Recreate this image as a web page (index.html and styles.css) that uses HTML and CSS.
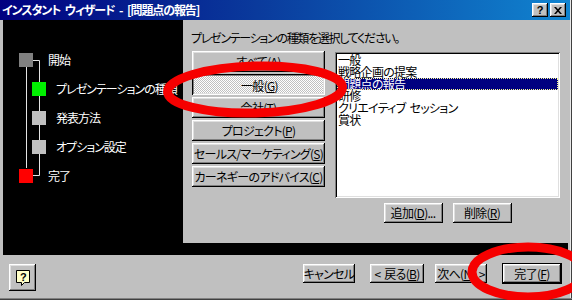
FILE: index.html
```html
<!DOCTYPE html>
<html lang="ja">
<head>
<meta charset="utf-8">
<title>インスタント ウィザード</title>
<link rel="stylesheet" href="styles.css">
</head>
<body>
<div class="window">
  <div class="titlebar">
    <span class="title">インスタント ウィザード - [問題点の報告]</span>
    <div class="tbtns">
      <span class="tbtn">?</span>
      <span class="tbtn"><svg width="8" height="7" viewBox="0 0 8 7"><path d="M0 0h2l2 2.3L6 0h2L5 3.5 8 7H6L4 4.7 2 7H0l3-3.5z" fill="#000"/></svg></span>
    </div>
  </div>
  <div class="main">
    <div class="steps">
      <svg class="connectors" width="180" height="200" viewBox="0 0 180 200">
        <path d="M30 40.5H36.5V155.5H30" fill="none" stroke="#e4e4e4" stroke-width="1"/>
        <path d="M23.5 46V148" fill="none" stroke="#e4e4e4" stroke-width="1"/>
      </svg>
      <div class="step outer"><span class="sq sq-gray"></span><span class="label">開始</span></div>
      <div class="step inner"><span class="sq sq-green"></span><span class="label">プレゼンテーションの種類</span></div>
      <div class="step inner"><span class="sq sq-light"></span><span class="label">発表方法</span></div>
      <div class="step inner"><span class="sq sq-light"></span><span class="label">オプション設定</span></div>
      <div class="step outer"><span class="sq sq-red"></span><span class="label">完了</span></div>
    </div>
    <div class="panel">
      <div class="heading">プレゼンテーションの種類を選択してください。</div>
      <div class="content">
        <div class="cats">
          <button class="btn cat">すべて(<u>A</u>)</button>
          <button class="btn cat pressed">一般(<u>G</u>)</button>
          <button class="btn cat">会社(<u>T</u>)</button>
          <button class="btn cat">プロジェクト(<u>P</u>)</button>
          <button class="btn cat">セールス/マーケティング(<u>S</u>)</button>
          <button class="btn cat">カーネギーのアドバイス(<u>C</u>)</button>
        </div>
        <div class="listcol">
          <div class="listbox">
            <div class="item">一般</div>
            <div class="item">戦略企画の提案</div>
            <div class="item sel">問題点の報告</div>
            <div class="item">研修</div>
            <div class="item">クリエイティブ セッション</div>
            <div class="item">賞状</div>
          </div>
          <div class="listbtns">
            <button class="btn small">追加(<u>D</u>)...</button>
            <button class="btn small">削除(<u>R</u>)</button>
          </div>
        </div>
      </div>
    </div>
  </div>
  <div class="footer">
    <button class="btn helpbtn" aria-label="ヘルプ">
      <svg width="14" height="17" viewBox="0 0 14 17">
        <path d="M0.5 0.5H13.5V12.5H8.5L5.5 15.5V12.5H0.5Z" fill="#ffffc8" stroke="#000" stroke-width="1"/>
        <text x="7" y="10.5" text-anchor="middle" font-family="Liberation Sans, sans-serif" font-weight="bold" font-size="11" fill="#000">?</text>
      </svg>
    </button>
    <div class="spacer"></div>
    <button class="btn fbtn cancel">キャンセル</button>
    <button class="btn fbtn back">&lt; 戻る(<u>B</u>)</button>
    <button class="btn fbtn next">次へ(<u>N</u>) &gt;</button>
    <div class="defwrap"><button class="btn fbtn finish">完了(<u>F</u>)</button></div>
  </div>
  <svg class="marks" width="572" height="300" viewBox="0 0 572 300">
    <ellipse cx="255" cy="89.5" rx="87.5" ry="23.5" fill="none" stroke="#f60000" stroke-width="9" transform="rotate(-1.5 255 89.5)"/>
    <ellipse cx="528" cy="272" rx="56" ry="25" fill="none" stroke="#f60000" stroke-width="9"/>
  </svg>
</div>
</body>
</html>
```
FILE: styles.css
```css
* { box-sizing: border-box; }
html, body { margin: 0; padding: 0; }
body {
  width: 572px;
  height: 300px;
  overflow: hidden;
  background: #c0c0c0;
  font-family: "Noto Sans CJK JP", "Noto Sans", sans-serif;
  font-size: 12px;
  font-feature-settings: "palt";
  letter-spacing: -0.7px;
  word-spacing: 2px;
  color: #000;
}
.window {
  position: relative;
  width: 572px;
  height: 300px;
  display: flex;
  flex-direction: column;
  background: #c0c0c0;
  box-shadow: inset -1px -1px #404040, inset -2px -2px #e8e8e8;
}
.titlebar {
  height: 20px;
  width: 570px;
  flex: none;
  display: flex;
  align-items: center;
  background: linear-gradient(90deg, #000080 0%, #0a3a9c 45%, #1084d0 100%);
  padding-left: 2px;
}
.title {
  flex: 1;
  color: #fff;
  font-weight: bold;
  font-size: 12px;
  line-height: 20px;
  white-space: pre;
  letter-spacing: -1.1px;
  word-spacing: 3px;
}
.tbtns { display: flex; gap: 2px; margin-right: 4px; }
.tbtn {
  width: 16px;
  height: 14px;
  background: #c0c0c0;
  box-shadow: inset -1px -1px #000, inset 1px 1px #fff, inset -2px -2px #808080, inset 2px 2px #dfdfdf;
  display: flex;
  align-items: center;
  justify-content: center;
  font-family: "Liberation Sans", sans-serif;
  font-weight: bold;
  font-size: 11px;
  line-height: 14px;
  letter-spacing: 0;
}
.main {
  flex: none;
  height: 235px;
  display: flex;
  margin: 0 4px 0 3px;
  background: #000;
}
.steps {
  width: 180px;
  flex: none;
  position: relative;
  overflow: hidden;
  padding-top: 25px;
  color: #fff;
}
.connectors { position: absolute; left: 0; top: 0; }
.step {
  position: relative;
  height: 29px;
  display: flex;
  align-items: center;
  white-space: nowrap;
  line-height: 14px;
  letter-spacing: -1px;
}
.step.outer { padding-left: 16px; gap: 15px; }
.step.inner { padding-left: 29px; gap: 10px; }
.sq { width: 14px; height: 14px; flex: none; }
.sq-gray { background: #808080; }
.sq-green { background: #00f000; }
.sq-light { background: #c0c0c0; }
.sq-red { background: #ff0000; }
.panel {
  flex: 1;
  background: #c0c0c0;
  margin-bottom: 12px;
  padding: 12px 8px 0 8px;
}
.heading {
  height: 12px;
  line-height: 12px;
  white-space: nowrap;
  letter-spacing: -1.3px;
}
.content { display: flex; margin-top: 7px; }
.cats {
  width: 133px;
  margin-left: 1px;
  display: flex;
  flex-direction: column;
  gap: 2px;
}
.btn {
  font: inherit;
  font-feature-settings: "palt";
  font-size: 12px;
  line-height: 12px;
  letter-spacing: -0.7px;
  word-spacing: 2px;
  color: #000;
  background: #c0c0c0;
  border: 0;
  margin: 0;
  padding: 0;
  box-shadow: inset -1px -1px #000, inset 1px 1px #fff, inset -2px -2px #808080, inset 2px 2px #dfdfdf;
  display: flex;
  align-items: center;
  justify-content: center;
  white-space: pre;
}
.cat { width: 133px; height: 21px; }
.cat.pressed {
  background: repeating-conic-gradient(#ffffff 0 25%, #c0c0c0 0 50%) 0 0 / 2px 2px;
  box-shadow: inset 1px 1px #000, inset -1px -1px #fff, inset 2px 2px #808080, inset -2px -2px #dfdfdf;
  padding: 2px 0 0 2px;
}
.listcol {
  width: 225px;
  margin-left: 10px;
  margin-top: 1px;
  display: flex;
  flex-direction: column;
  align-items: center;
}
.listbox {
  width: 225px;
  height: 146px;
  background: #fff;
  padding: 2px;
  box-shadow: inset 1px 1px #808080, inset -1px -1px #fff, inset 2px 2px #000, inset -2px -2px #dfdfdf;
}
.item {
  height: 12px;
  line-height: 12px;
  padding-left: 1px;
  white-space: pre;
}
.item.sel {
  background: #000080;
  color: #fff;
  outline: 1px dotted #ffff90;
  outline-offset: -1px;
}
.listbtns { display: flex; gap: 10px; margin-top: 5px; }
.small { width: 59px; height: 20px; }
.footer {
  flex: 1;
  display: flex;
  align-items: flex-start;
  padding: 9px 10px 0 9px;
  box-shadow: inset 0 -1px #404040, inset 0 -2px #808080;
}
.helpbtn { width: 27px; height: 27px; padding-top: 1px; }
.spacer { flex: 1; }
.fbtn { height: 19px; }
.cancel { width: 52px; }
.back { width: 54px; margin-left: 15px; }
.next { width: 52px; margin-left: 11px; }
.defwrap {
  margin-left: 15px;
  margin-top: -1px;
  border: 1px solid #000;
}
.finish { width: 58px; }
.marks {
  position: absolute;
  left: 0;
  top: 0;
  pointer-events: none;
}
```
